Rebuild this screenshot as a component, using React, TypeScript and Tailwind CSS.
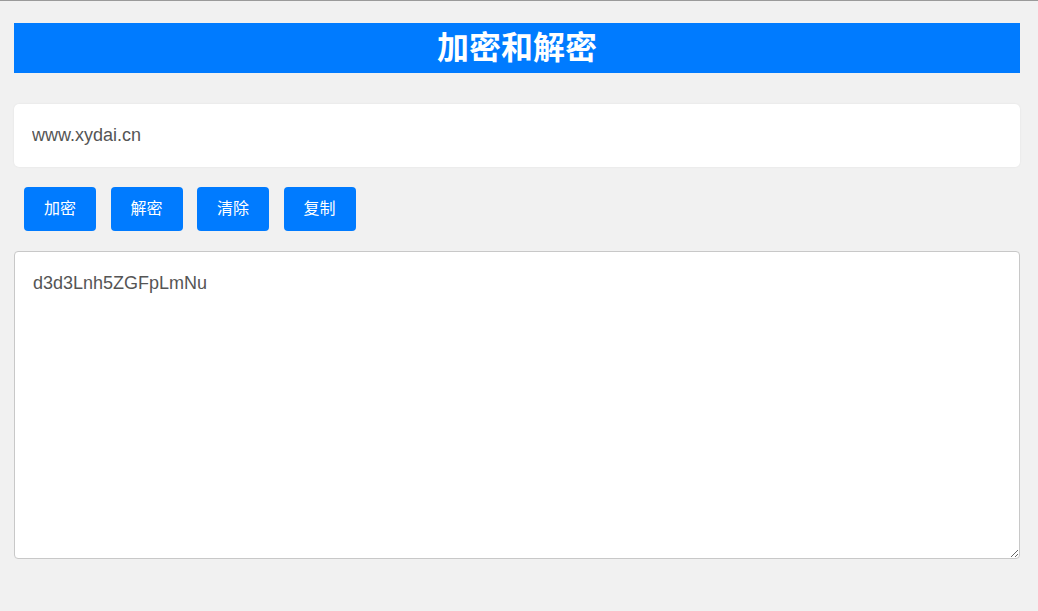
import { useState } from "react";

export default function App() {
  const [input, setInput] = useState("www.xydai.cn");
  const [output, setOutput] = useState("d3d3Lnh5ZGFpLmNu");

  const encode = () => {
    try {
      setOutput(btoa(unescape(encodeURIComponent(input))));
    } catch {
      setOutput("");
    }
  };
  const decode = () => {
    try {
      setOutput(decodeURIComponent(escape(atob(input))));
    } catch {
      setOutput("解密失败");
    }
  };
  const clear = () => {
    setInput("");
    setOutput("");
  };
  const copy = () => {
    navigator.clipboard?.writeText(output);
  };

  const actions = [
    { label: "加密", onClick: encode },
    { label: "解密", onClick: decode },
    { label: "清除", onClick: clear },
    { label: "复制", onClick: copy },
  ];

  return (
    <div
      className="min-h-[611px] bg-[#f1f1f1] border-t border-[#9a9a9a] pl-[14px] pr-[18px] pt-[22px] pb-[40px]"
      style={{ fontFamily: '"Liberation Sans", Arial, "Noto Sans CJK SC", sans-serif' }}
    >
      {/* Header */}
      <h1 className="bg-[#007bff] h-[50px] flex items-center justify-center text-white text-[32px] font-bold leading-none">
        加密和解密
      </h1>

      {/* Input */}
      <input
        value={input}
        onChange={(e) => setInput(e.target.value)}
        className="mt-[31px] block w-full h-[63px] bg-white rounded-[5px] px-[18px] text-[18px] text-[#555] shadow-[0_0_2px_rgba(0,0,0,0.08)] outline-none"
      />

      {/* Buttons */}
      <div className="flex gap-[14.5px] mt-[20px] pl-[10px]">
        {actions.map((a) => (
          <button
            key={a.label}
            onClick={a.onClick}
            className="w-[72px] h-[44px] bg-[#007bff] hover:bg-[#0069d9] text-white text-[16px] rounded-[4px]"
          >
            {a.label}
          </button>
        ))}
      </div>

      {/* Output */}
      <textarea
        value={output}
        onChange={(e) => setOutput(e.target.value)}
        className="mt-[20px] block w-full h-[308px] bg-white border border-[#c8c8c8] rounded-[4px] px-[18px] py-[20px] text-[18px] leading-[22px] text-[#555] outline-none"
      />
    </div>
  );
}
